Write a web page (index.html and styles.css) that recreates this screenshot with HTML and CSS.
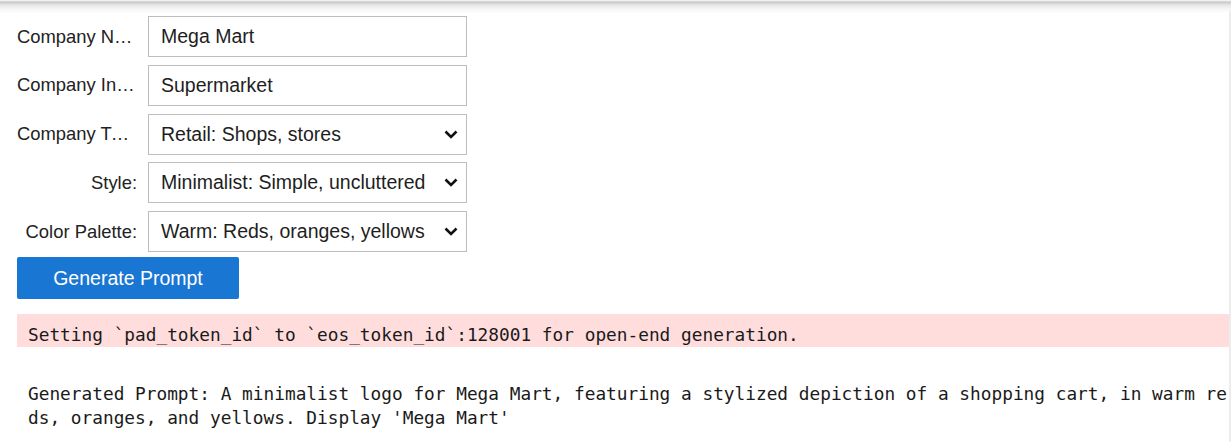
FILE: index.html
```html
<!DOCTYPE html>
<html>
<head>
<meta charset="utf-8">
<link rel="stylesheet" href="styles.css">
</head>
<body>
<div class="topshade"></div>
<main class="page">
  <section class="form">
    <div class="row">
      <label class="label">Company Name:</label>
      <div class="field">Mega Mart</div>
    </div>
    <div class="row">
      <label class="label">Company Industry:</label>
      <div class="field">Supermarket</div>
    </div>
    <div class="row">
      <label class="label">Company Type:</label>
      <div class="field select"><span>Retail: Shops, stores</span><svg class="chev" width="14" height="9" viewBox="0 0 14 9"><path d="M1.5 1.5 L7 7 L12.5 1.5" fill="none" stroke="#111" stroke-width="2.6"/></svg></div>
    </div>
    <div class="row">
      <label class="label">Style:</label>
      <div class="field select"><span>Minimalist: Simple, uncluttered</span><svg class="chev" width="14" height="9" viewBox="0 0 14 9"><path d="M1.5 1.5 L7 7 L12.5 1.5" fill="none" stroke="#111" stroke-width="2.6"/></svg></div>
    </div>
    <div class="row">
      <label class="label">Color Palette:</label>
      <div class="field select"><span>Warm: Reds, oranges, yellows</span><svg class="chev" width="14" height="9" viewBox="0 0 14 9"><path d="M1.5 1.5 L7 7 L12.5 1.5" fill="none" stroke="#111" stroke-width="2.6"/></svg></div>
    </div>
  </section>
  <button class="btn">Generate Prompt</button>
  <pre class="stderr">Setting `pad_token_id` to `eos_token_id`:128001 for open-end generation.</pre>
  <pre class="stdout">Generated Prompt: A minimalist logo for Mega Mart, featuring a stylized depiction of a shopping cart, in warm reds, oranges, and yellows. Display 'Mega Mart'</pre>
</main>
</body>
</html>
```

FILE: styles.css
```css
html, body {
  margin: 0;
  padding: 0;
  background: #ffffff;
}
body {
  width: 1229px;
  min-height: 442px;
  border-right: 2px solid #ececec;
  font-family: "Liberation Sans", Arial, sans-serif;
  color: #212121;
}
.topshade {
  position: fixed;
  top: 0;
  left: 0;
  right: 0;
  height: 14px;
  background: linear-gradient(to bottom, #ffffff 0px, #c8c8c8 2px, #e6e6e6 5px, #f6f6f6 9px, rgba(255,255,255,0) 14px);
  pointer-events: none;
}
.page {
  padding: 16px 0 0 17px;
}
.form {
  display: flex;
  flex-direction: column;
  gap: 7.75px;
}
.row {
  display: flex;
  align-items: center;
  gap: 11px;
}
.label {
  width: 120px;
  flex: none;
  font-size: 18.4px;
  text-align: right;
  white-space: nowrap;
  overflow: hidden;
  text-overflow: ellipsis;
  color: #222;
}
.field {
  box-sizing: border-box;
  width: 319px;
  height: 41px;
  border: 1px solid #bdbdbd;
  padding: 0 8px 0 12px;
  display: flex;
  align-items: center;
  font-size: 19.5px;
  color: #1e1e1e;
  background: #fff;
  white-space: nowrap;
}
.select {
  justify-content: space-between;
}
.chev {
  flex: none;
  margin-left: 6px;
}
.btn {
  display: block;
  margin-top: 5px;
  width: 222px;
  height: 42px;
  border: none;
  border-radius: 2px;
  background: #1976d2;
  color: #ffffff;
  font-family: "Liberation Sans", Arial, sans-serif;
  font-size: 19.5px;
  padding: 0;
}
.stderr, .stdout {
  font-family: "DejaVu Sans Mono", "Liberation Mono", monospace;
  font-size: 17.8px;
  line-height: 24px;
  margin: 0;
  color: #1a1a1a;
}
.stderr {
  margin-top: 15px;
  background: #ffdddd;
  padding: 9px 0 0 11px;
  height: 24px;
  white-space: pre;
}
.stdout {
  margin-top: 35px;
  padding-left: 11px;
  width: 112ch;
  white-space: pre-wrap;
  word-break: break-all;
}
```
